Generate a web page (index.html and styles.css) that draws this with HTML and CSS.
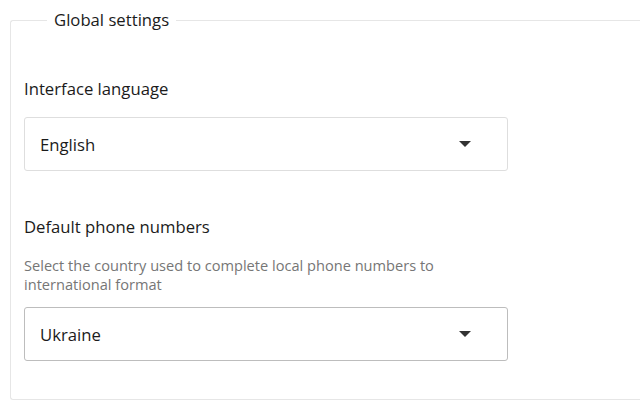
FILE: index.html
```html
<!DOCTYPE html>
<html>
<head>
<meta charset="utf-8">
<link rel="stylesheet" href="styles.css">
</head>
<body>
<fieldset class="group">
  <legend class="group-title">Global settings</legend>
  <div class="field field-first">
    <div class="field-label">Interface language</div>
    <div class="select">
      <span class="select-value">English</span>
      <svg class="caret" width="12" height="6" viewBox="0 0 12 6"><path d="M0 0h12L6 6z" fill="#333"/></svg>
    </div>
  </div>
  <div class="field">
    <div class="field-label">Default phone numbers</div>
    <div class="field-help">Select the country used to complete local phone numbers to international format</div>
    <div class="select select-active">
      <span class="select-value">Ukraine</span>
      <svg class="caret" width="12" height="6" viewBox="0 0 12 6"><path d="M0 0h12L6 6z" fill="#333"/></svg>
    </div>
  </div>
</fieldset>
</body>
</html>
```
FILE: styles.css
```css
html, body {
  margin: 0;
  padding: 0;
  background: #fff;
  overflow: hidden;
}
body {
  padding-top: 9px;
  font-family: "Open Sans", "Noto Sans", sans-serif;
  color: #1b1b1b;
  height: 400px;
  box-sizing: border-box;
}
.group {
  margin: 0 0 0 10px;
  width: 630px;
  height: 391px;
  box-sizing: border-box;
  border: 1px solid #e6e6e6;
  border-right: none;
  border-radius: 3px 0 0 3px;
  padding: 0 13px;
}
.group-title {
  margin-left: 23px;
  padding: 0 7px;
  font-size: 16.7px;
  line-height: 22px;
}
.field-first {
  margin-top: 47px;
}
.field {
  width: 484px;
}
.field + .field {
  margin-top: 45px;
}
.field-label {
  font-size: 16.7px;
  line-height: 22px;
  margin-bottom: 17px;
}
.field + .field .field-label {
  margin-bottom: 19px;
}
.field-help {
  font-size: 14.6px;
  line-height: 19px;
  color: #767676;
  margin-top: -1px;
  margin-bottom: 13px;
}
.select {
  height: 54px;
  box-sizing: border-box;
  border: 1px solid #dedede;
  border-radius: 3px;
  display: flex;
  align-items: center;
  justify-content: space-between;
  padding: 0 36px 0 15px;
}
.select-active {
  border-color: #bdbdbd;
}
.select-value {
  font-size: 16.7px;
}
.caret {
  display: block;
}
```
